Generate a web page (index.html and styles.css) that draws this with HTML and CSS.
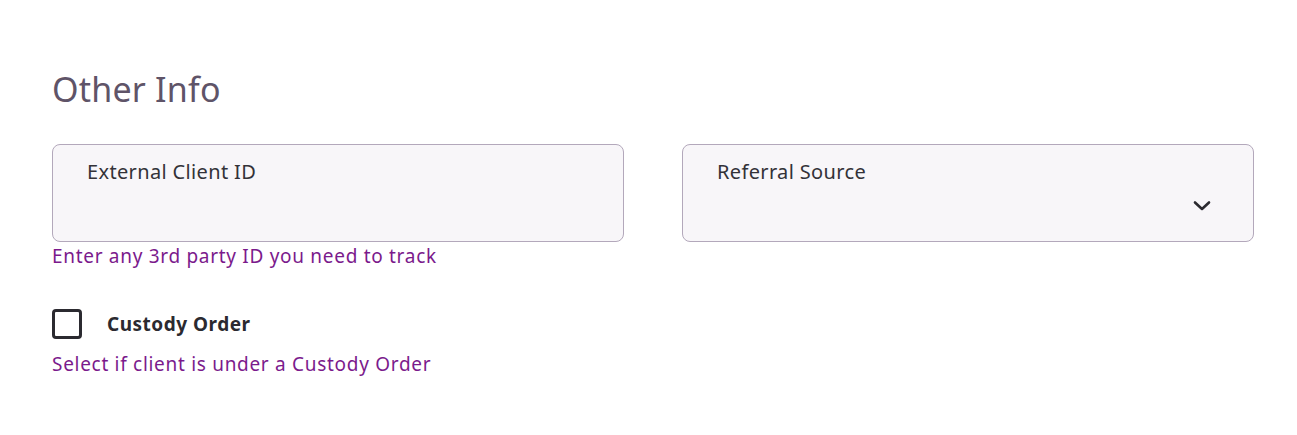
FILE: index.html
```html
<!DOCTYPE html>
<html>
<head>
<meta charset="utf-8">
<link rel="stylesheet" href="styles.css">
</head>
<body>
<div class="page">
  <h2 class="title">Other Info</h2>
  <div class="grid">
    <div class="field">
      <div class="box"><span class="label">External Client ID</span></div>
      <div class="help">Enter any 3rd party ID you need to track</div>
    </div>
    <div class="field">
      <div class="box select"><span class="label">Referral Source</span>
        <svg class="chev" width="18" height="12" viewBox="0 0 18 12"><path d="M2 2.5 L9 9 L16 2.5" fill="none" stroke="#2b2a30" stroke-width="2.6" stroke-linecap="round" stroke-linejoin="round"/></svg>
      </div>
    </div>
  </div>
  <div class="check-row">
    <span class="checkbox"></span>
    <span class="check-label">Custody Order</span>
  </div>
  <div class="help help2">Select if client is under a Custody Order</div>
</div>
</body>
</html>
```
FILE: styles.css
```css
* { box-sizing: border-box; }
html, body { margin: 0; padding: 0; background: #fff; }
body { font-family: "Noto Sans", "Open Sans", sans-serif; color: #2b2a30; }
.page { padding: 64px 43px 0 52px; }
.title { margin: 0; font-weight: 400; font-size: 34px; line-height: 50px; color: #5f5468; letter-spacing: 0.2px; }
.grid { display: grid; grid-template-columns: 572px 572px; column-gap: 58px; margin-top: 30px; }
.box { height: 98px; border: 1px solid #b3a8bb; border-radius: 8px; background: #f8f6f9; padding: 14px 34px; position: relative; }
.label { font-size: 20px; line-height: 26px; color: #333238; letter-spacing: 0.35px; }
.chev { position: absolute; right: 42px; top: 55px; }
.help { font-size: 19px; line-height: 26px; color: #7b1a8c; margin-top: 1px; letter-spacing: 0.7px; }
.check-row { display: flex; align-items: center; margin-top: 39px; height: 32px; }
.checkbox { width: 30px; height: 30px; border: 3px solid #2b2a30; border-radius: 4px; margin-right: 25px; }
.check-label { font-size: 19px; font-weight: 700; color: #2b2a30; letter-spacing: 0.5px; }
.help2 { margin-top: 11px; }
```
